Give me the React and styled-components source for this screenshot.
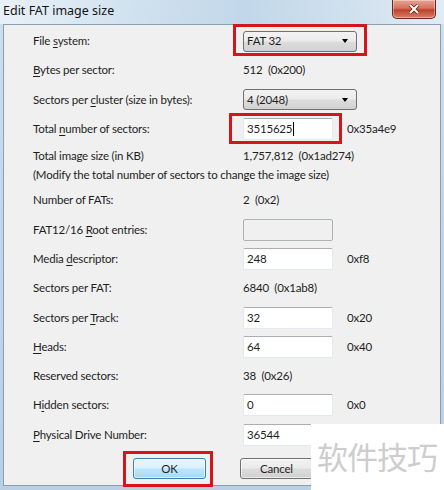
import React from "react";
import styled, { createGlobalStyle } from "styled-components";

const GlobalStyle = createGlobalStyle`
  html, body {
    margin: 0;
    padding: 0;
  }
  body {
    font-family: Lato, "Noto Sans", "Liberation Sans", sans-serif;
    font-size: 11.5px;
    letter-spacing: -0.2px;
    color: #1e1e1e;
  }
`;

const rows = [
  { label: ["File ", "s", "ystem:"], kind: "select", value: "FAT 32", mark: true },
  { label: ["", "B", "ytes per sector:"], kind: "text", value: "512  (0x200)" },
  { label: ["Sectors per ", "c", "luster (size in bytes):"], kind: "select", value: "4 (2048)" },
  { label: ["Total ", "n", "umber of sectors:"], kind: "input", value: "3515625", hex: "0x35a4e9", mark: true, caret: true },
  { label: ["Total image size (in KB)", "", ""], kind: "text", value: "1,757,812  (0x1ad274)", note: "(Modify the total number of sectors to change the image size)", tall: true },
  { label: ["Number of FATs:", "", ""], kind: "text", value: "2  (0x2)" },
  { label: ["FAT12/16 ", "R", "oot entries:"], kind: "input", value: "", disabled: true },
  { label: ["Media ", "d", "escriptor:"], kind: "input", value: "248", hex: "0xf8" },
  { label: ["Sectors per FAT:", "", ""], kind: "text", value: "6840  (0x1ab8)" },
  { label: ["Sectors per ", "T", "rack:"], kind: "input", value: "32", hex: "0x20" },
  { label: ["", "H", "eads:"], kind: "input", value: "64", hex: "0x40" },
  { label: ["Reserved sectors:", "", ""], kind: "text", value: "38  (0x26)" },
  { label: ["H", "i", "dden sectors:"], kind: "input", value: "0", hex: "0x0" },
  { label: ["", "P", "hysical Drive Number:"], kind: "input", value: "36544" },
];

const Win = styled.div`
  position: relative;
  width: 444px;
  height: 490px;
  overflow: hidden;
  background: linear-gradient(180deg, #cfe0ee 0%, #c3d7e9 40%, #b9cfe4 100%);
  display: flex;
  flex-direction: column;
`;

const TitleBar = styled.div`
  height: 24px;
  display: flex;
  justify-content: space-between;
  align-items: flex-start;
  padding: 0 8px 0 3px;
  background: linear-gradient(
    90deg,
    rgba(255, 255, 255, 0.55) 0%,
    rgba(214, 229, 240, 0.3) 30%,
    rgba(170, 200, 225, 0.35) 55%,
    rgba(214, 229, 240, 0.3) 80%,
    rgba(255, 255, 255, 0.4) 100%
  );
`;

const Title = styled.span`
  font-family: "Noto Sans", sans-serif;
  font-size: 12.5px;
  letter-spacing: 0;
  line-height: 22px;
  color: #141414;
`;

const CloseBtn = styled.div`
  width: 42px;
  height: 18px;
  border: 1px solid #6a2a20;
  border-top: none;
  border-radius: 0 0 5px 5px;
  background: linear-gradient(180deg, #e8a493 0%, #d5735e 45%, #c0412a 55%, #d7806a 100%);
  display: flex;
  align-items: center;
  justify-content: center;
  box-shadow: inset 0 0 0 1px rgba(255, 255, 255, 0.35);
`;

const Client = styled.div`
  flex: 1;
  margin: 0 3px 4px 3px;
  background: #f0f0f0;
  border: 1px solid #8a9db3;
  padding: 1.5px 0 0 29px;
  display: flex;
  flex-direction: column;
`;

const Row = styled.div`
  display: grid;
  grid-template-columns: 210px 104px auto;
  align-items: ${(p) => (p.$tall ? "start" : "center")};
  height: ${(p) => (p.$tall ? "42px" : "29.3px")};
  padding-top: ${(p) => (p.$tall ? "4px" : "0")};
  box-sizing: border-box;
  line-height: 16px;
`;

const Label = styled.span`
  white-space: nowrap;
  u {
    text-decoration: underline;
    text-underline-offset: 2px;
  }
`;

const Note = styled.div`
  grid-column: 1 / 4;
  white-space: nowrap;
`;

const Value = styled.span`
  white-space: pre;
`;

const Hex = styled.span``;

const Marked = styled.div`
  position: relative;
  display: flex;
  justify-self: start;
  &::after {
    content: "";
    position: absolute;
    left: ${(p) => p.$l}px;
    right: ${(p) => p.$r}px;
    top: ${(p) => p.$t}px;
    bottom: ${(p) => p.$b}px;
    border: 3px solid #d4151c;
    pointer-events: none;
  }
`;

const Select = styled.div`
  flex-shrink: 0;
  width: ${(p) => p.$w}px;
  height: 21px;
  box-sizing: border-box;
  border: 1px solid #707070;
  border-radius: 3px;
  background: linear-gradient(180deg, #f3f3f3 0%, #ebebeb 48%, #dddddd 52%, #d1d1d1 100%);
  display: flex;
  align-items: center;
  justify-content: space-between;
  padding: 0 8px 0 3px;
`;

const Arrow = styled.span`
  width: 0;
  height: 0;
  border-left: 3.5px solid transparent;
  border-right: 3.5px solid transparent;
  border-top: 4px solid #000;
`;

const Input = styled.div`
  flex-shrink: 0;
  width: 90px;
  height: 22px;
  box-sizing: border-box;
  border: 1px solid ${(p) => (p.$disabled ? "#adb2b5" : "#e3e9ef")};
  border-top-color: ${(p) => (p.$disabled ? "#adb2b5" : "#abadb3")};
  border-radius: 2px;
  background: ${(p) => (p.$disabled ? "#f0f0f0" : "#ffffff")};
  padding: 0 3px;
  display: flex;
  align-items: center;
  line-height: 16px;
`;

const Caret = styled.span`
  display: inline-block;
  width: 1px;
  height: 14px;
  background: #000;
  margin-left: 1px;
`;

const Buttons = styled.div`
  display: flex;
  gap: 34px;
  padding: 9px 0 0 100px;
`;

const Button = styled.div`
  width: 73px;
  height: 21px;
  box-sizing: border-box;
  border: 1px solid ${(p) => (p.$primary ? "#3c7fb1" : "#707070")};
  border-radius: 3px;
  background: ${(p) =>
    p.$primary
      ? "linear-gradient(180deg, #eaf6fd 0%, #d9f0fc 48%, #bee6fd 52%, #a7d9f5 100%)"
      : "linear-gradient(180deg, #f2f2f2 0%, #ebebeb 48%, #dddddd 52%, #cfcfcf 100%)"};
  box-shadow: inset 0 0 0 1px rgba(255, 255, 255, 0.6);
  display: flex;
  align-items: center;
  justify-content: center;
`;

const Watermark = styled.div`
  position: absolute;
  left: 311px;
  top: 424px;
  right: 0;
  bottom: 0;
  background: #ffffff;
  color: #cdcdcd;
  font-family: "Noto Sans CJK SC", sans-serif;
  font-size: 31px;
  line-height: 1;
  padding: 16px 0 0 6px;
  letter-spacing: -1px;
`;

function LabelText({ parts }) {
  return (
    <Label>
      {parts[0]}
      {parts[1] && <u>{parts[1]}</u>}
      {parts[2]}
    </Label>
  );
}

function Field({ row }) {
  if (row.kind === "select") {
    const box = (
      <Select $w={114}>
        <span>{row.value}</span>
        <Arrow />
      </Select>
    );
    return row.mark ? (
      <Marked $l={-10} $r={-10} $t={-7} $b={-4}>
        {box}
      </Marked>
    ) : (
      box
    );
  }
  if (row.kind === "input") {
    const box = (
      <Input $disabled={row.disabled}>
        {row.value}
        {row.caret && <Caret />}
      </Input>
    );
    return row.mark ? (
      <Marked $l={-14} $r={-9} $t={-5} $b={-4}>
        {box}
      </Marked>
    ) : (
      box
    );
  }
  return <Value>{row.value}</Value>;
}

export default function App() {
  return (
    <>
      <GlobalStyle />
      <Win>
        <TitleBar>
          <Title>Edit FAT image size</Title>
          <CloseBtn>
            <svg width="12" height="10" viewBox="0 0 12 10">
              <path d="M2 1 L10 9 M10 1 L2 9" stroke="#5a1d14" strokeWidth="3.4" />
              <path d="M2 1 L10 9 M10 1 L2 9" stroke="#ffffff" strokeWidth="2" />
            </svg>
          </CloseBtn>
        </TitleBar>
        <Client>
          {rows.map((row, i) => (
            <Row key={i} $tall={row.tall}>
              <LabelText parts={row.label} />
              <Field row={row} />
              <Hex>{row.hex || ""}</Hex>
              {row.note && <Note>{row.note}</Note>}
            </Row>
          ))}
          <Buttons>
            <Marked $l={-10} $r={-7} $t={-7} $b={-8}>
              <Button $primary>OK</Button>
            </Marked>
            <Button>Cancel</Button>
          </Buttons>
        </Client>
        <Watermark>软件技巧</Watermark>
      </Win>
    </>
  );
}
